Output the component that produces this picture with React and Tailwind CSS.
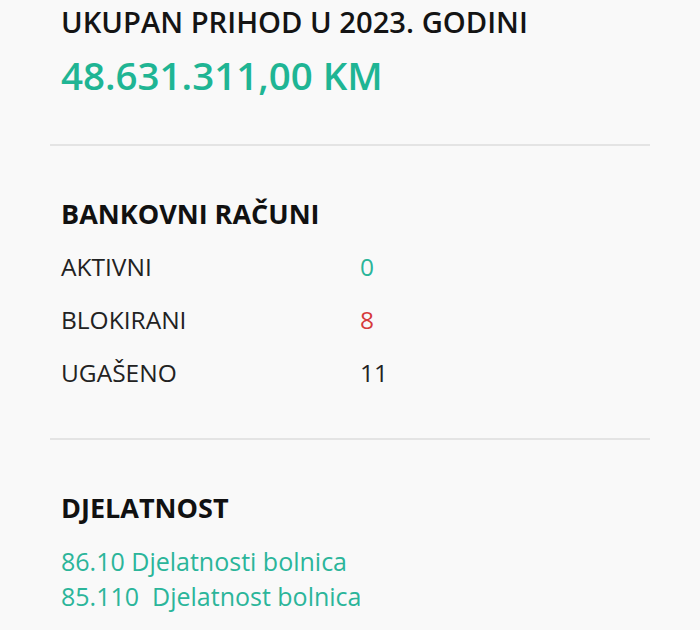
export default function App() {
  const racuni = [
    { label: 'AKTIVNI', value: '0', color: 'text-[#2bb59a]' },
    { label: 'BLOKIRANI', value: '8', color: 'text-[#d63b3b]' },
    { label: 'UGAŠENO', value: '11', color: 'text-[#222]' },
  ];

  return (
    <div className="min-h-screen w-[700px] h-[630px] overflow-hidden bg-[#f9f9f9] px-[50px] font-['Open_Sans',sans-serif]">
      <div className="pl-[11px] pt-[4px] pb-[45px]">
        <h1 className="text-[29.2px] leading-[36px] font-semibold text-[#141414]">UKUPAN PRIHOD U 2023. GODINI</h1>
        <p className="mt-[11px] text-[38.5px] leading-[48px] font-semibold text-[#1fb594]">48.631.311,00 KM</p>
      </div>
      <div className="h-[2px] bg-[#e4e4e4]" />

      <div className="pl-[11px] pt-[52px] pb-[49px]">
        <h2 className="text-[27px] leading-[32px] font-bold text-[#111]">BANKOVNI RAČUNI</h2>
        <div className="mt-[21px] flex flex-col gap-[21px]">
          {racuni.map((r) => (
            <div key={r.label} className="flex text-[24.5px] leading-[32px] text-[#222]">
              <span className="w-[299px]">{r.label}</span>
              <span className={r.color}>{r.value}</span>
            </div>
          ))}
        </div>
      </div>
      <div className="h-[2px] bg-[#e4e4e4]" />

      <div className="pl-[11px] pt-[52px]">
        <h2 className="text-[27px] leading-[32px] font-bold text-[#111]">DJELATNOST</h2>
        <div className="mt-[20px] text-[25px] leading-[35px] text-[#2bb59a]">
          <p>86.10 Djelatnosti bolnica</p>
          <p className="whitespace-pre">85.110  Djelatnost bolnica</p>
        </div>
      </div>
    </div>
  );
}
